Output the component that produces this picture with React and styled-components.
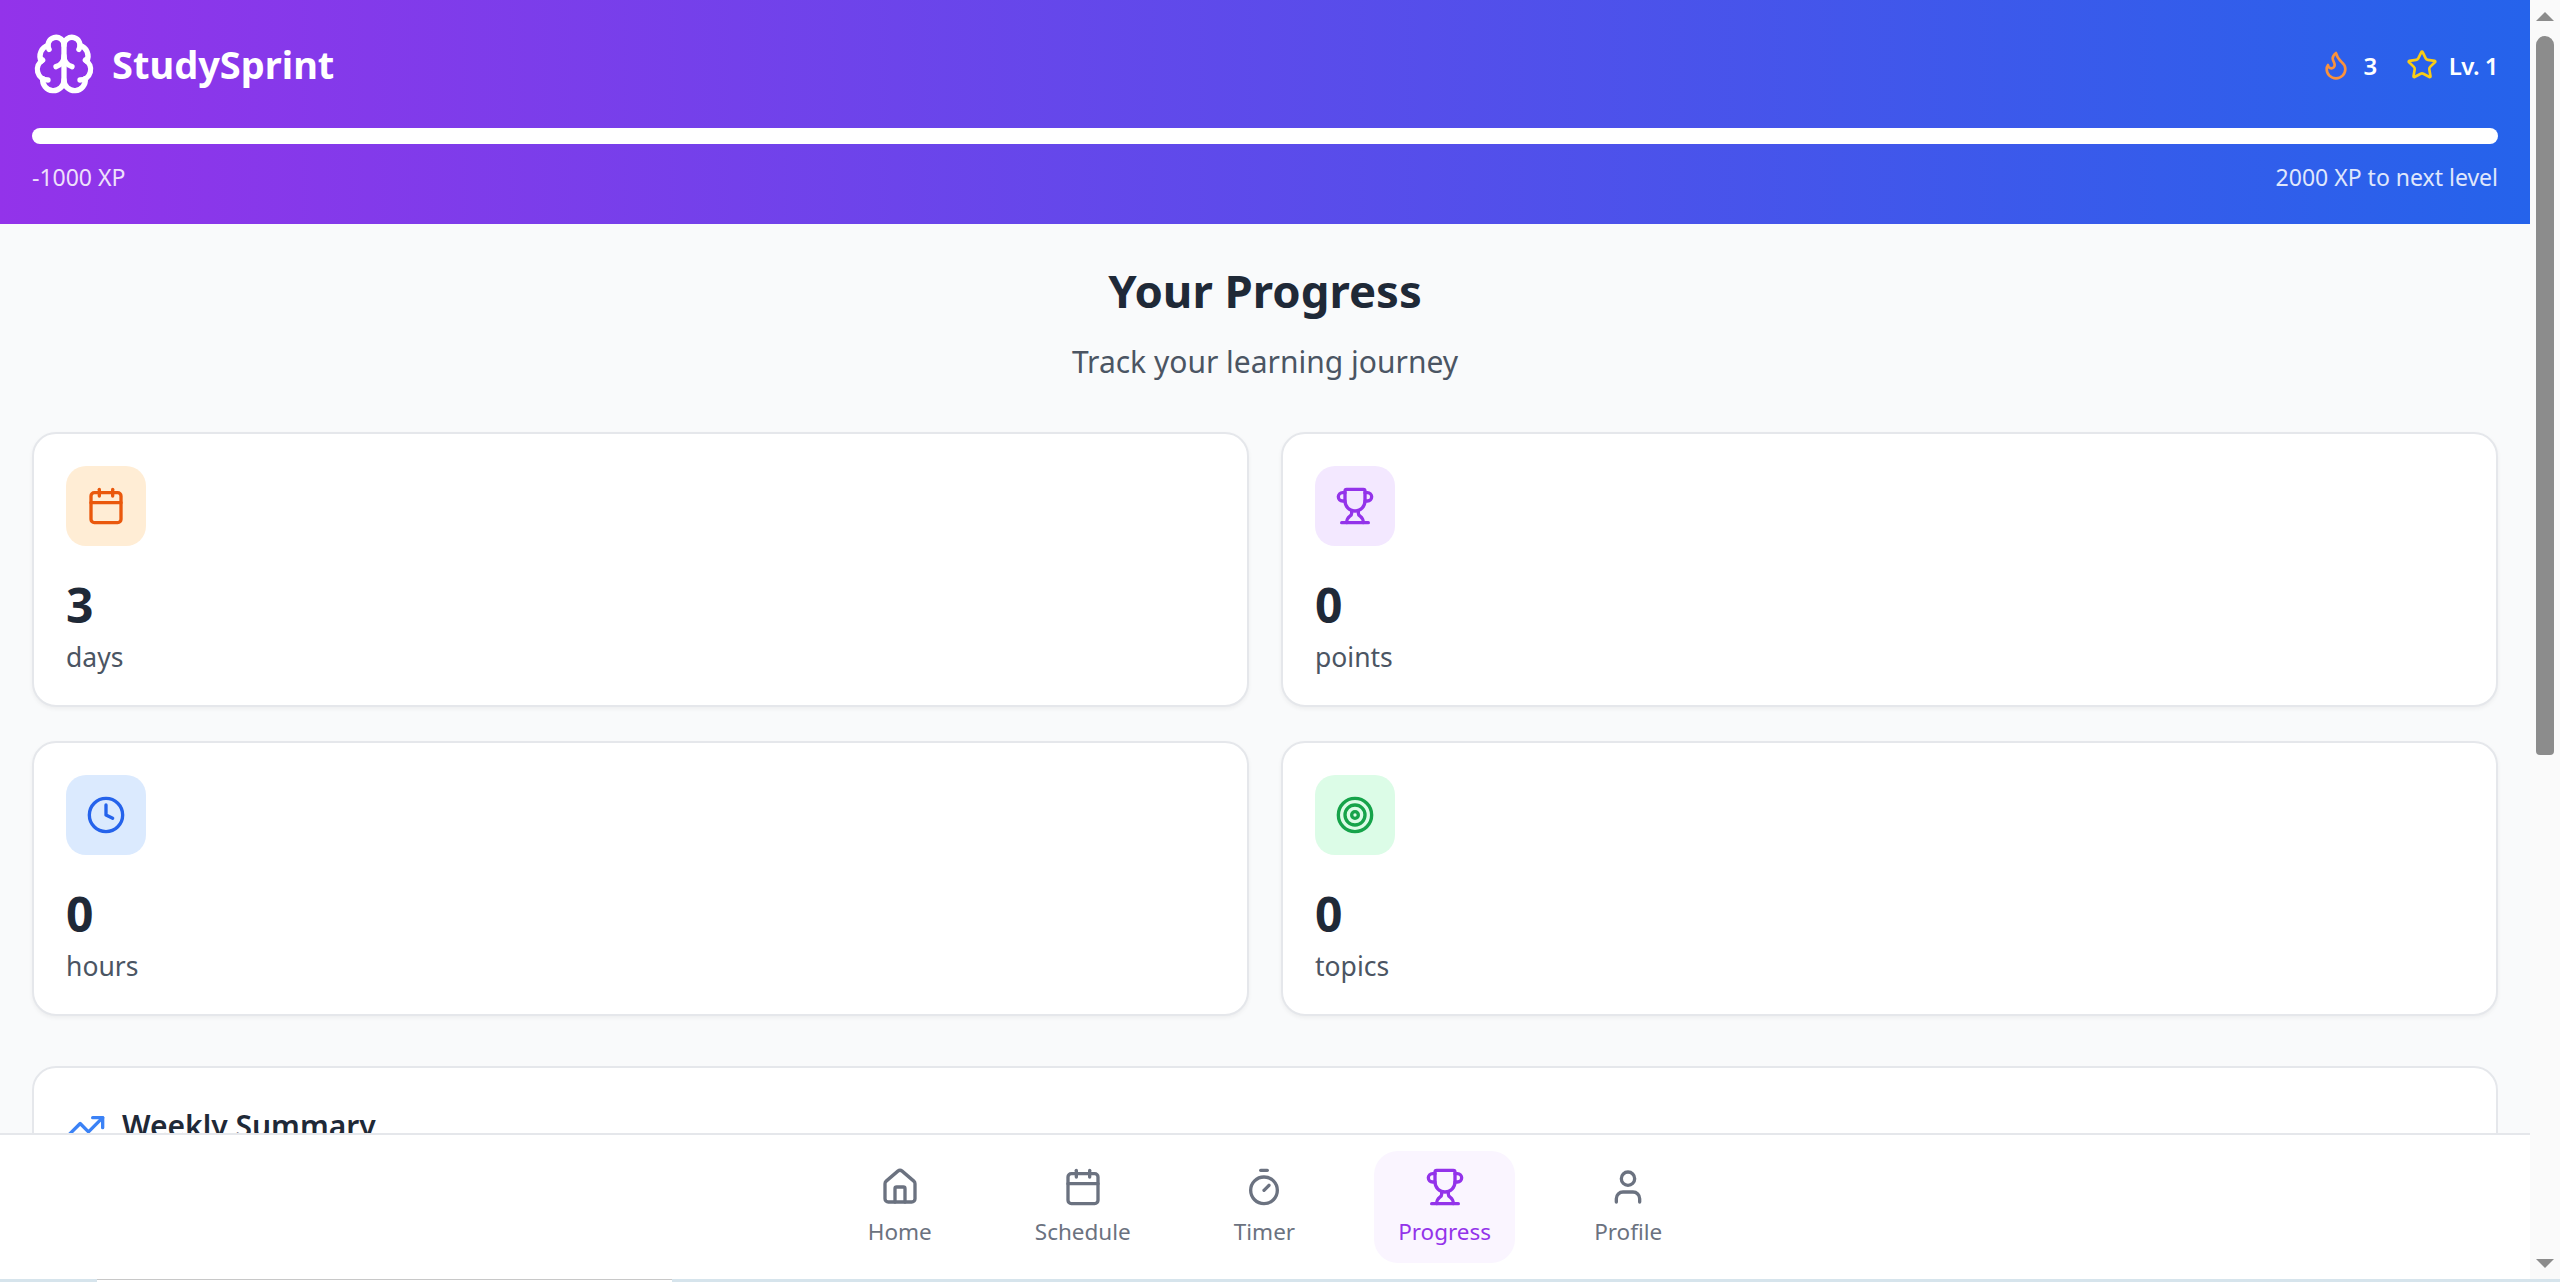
import React from 'react';
import styled, { createGlobalStyle } from 'styled-components';
import { Brain, Flame, Star, Calendar, Trophy, Clock, Target, TrendingUp, Home, Timer, User } from 'lucide-react';

const GlobalStyle = createGlobalStyle`
    html, body {
        margin : 0;
        padding : 0;
        height : 100%;
        overflow : hidden;
    }
    body {
        font-family : "Noto Sans", "Liberation Sans", sans-serif;
        background : #ffffff;
    }
`

const stats = [
    { icon : Calendar, value : '3', label : 'days', bg : '#ffedd5', fg : '#ea580c' },
    { icon : Trophy, value : '0', label : 'points', bg : '#f3e8ff', fg : '#9333ea' },
    { icon : Clock, value : '0', label : 'hours', bg : '#dbeafe', fg : '#2563eb' },
    { icon : Target, value : '0', label : 'topics', bg : '#dcfce7', fg : '#16a34a' },
];

const tabs = [
    { icon : Home, label : 'Home' },
    { icon : Calendar, label : 'Schedule' },
    { icon : Timer, label : 'Timer' },
    { icon : Trophy, label : 'Progress', active : true },
    { icon : User, label : 'Profile' },
];

const App = () => {
    return (
        <Frame>
            <GlobalStyle/>
            <Window>
                <Main>
                    <Header>
                        <HeaderTop>
                            <Logo>
                                <Brain size={64} color="#ffffff" strokeWidth={2}/>
                                <LogoText>StudySprint</LogoText>
                            </Logo>
                            <HeaderStats>
                                <HeaderStat>
                                    <Flame size={32} color="#fb923c"/>
                                    <span>3</span>
                                </HeaderStat>
                                <HeaderStat>
                                    <Star size={32} color="#facc15"/>
                                    <span>Lv. 1</span>
                                </HeaderStat>
                            </HeaderStats>
                        </HeaderTop>
                        <XpTrack/>
                        <XpRow>
                            <span>-1000 XP</span>
                            <span>2000 XP to next level</span>
                        </XpRow>
                    </Header>
                    <Content>
                        <Title>Your Progress</Title>
                        <Subtitle>Track your learning journey</Subtitle>
                        <StatGrid>
                            {stats.map((s) => (
                                <StatCard key={s.label}>
                                    <IconBox $bg={s.bg}>
                                        <s.icon size={40} color={s.fg}/>
                                    </IconBox>
                                    <StatValue>{s.value}</StatValue>
                                    <StatLabel>{s.label}</StatLabel>
                                </StatCard>
                            ))}
                        </StatGrid>
                        <SummaryCard>
                            <SummaryHead>
                                <TrendingUp size={40} color="#3b82f6"/>
                                <SummaryTitle>Weekly Summary</SummaryTitle>
                            </SummaryHead>
                        </SummaryCard>
                    </Content>
                    <BottomNav>
                        {tabs.map((t) => (
                            <NavItem key={t.label} $active={t.active}>
                                <t.icon size={40}/>
                                <NavLabel>{t.label}</NavLabel>
                            </NavItem>
                        ))}
                    </BottomNav>
                </Main>
                <ScrollBar>
                    <ArrowUp/>
                    <ScrollThumb/>
                    <ArrowDown/>
                </ScrollBar>
            </Window>
            <TaskStrip>
                <TaskTab/>
            </TaskStrip>
        </Frame>
    );
};

const Frame = styled.div`
    width : 2560px;
    height : 1282px;
    display : flex;
    flex-direction : column;
    overflow : hidden;
`

const Window = styled.div`
    flex : 1;
    min-height : 0;
    display : flex;
`

const Main = styled.div`
    width : 2530px;
    display : flex;
    flex-direction : column;
    background : #f9fafb;
`

const Header = styled.header`
    height : 224px;
    box-sizing : border-box;
    padding : 32px 32px 0;
    color : #ffffff;
    background : linear-gradient(to right, #9333ea, #2563eb);
`

const HeaderTop = styled.div`
    height : 64px;
    display : flex;
    justify-content : space-between;
    align-items : center;
`

const Logo = styled.div`
    display : flex;
    align-items : center;
    gap : 16px;
`

const LogoText = styled.span`
    font-size : 38px;
    font-weight : 700;
`

const HeaderStats = styled.div`
    display : flex;
    gap : 29px;
`

const HeaderStat = styled.div`
    display : flex;
    align-items : center;
    gap : 11px;
    padding-top : 2px;
    font-size : 24px;
    letter-spacing : -0.5px;
    font-weight : 600;
`

const XpTrack = styled.div`
    height : 16px;
    margin-top : 32px;
    border-radius : 8px;
    background : #ffffff;
`

const XpRow = styled.div`
    display : flex;
    justify-content : space-between;
    margin-top : 17px;
    font-size : 23px;
    line-height : 32px;
    opacity : 0.85;
`

const Content = styled.main`
    flex : 1;
    min-height : 0;
    overflow : hidden;
    padding : 34px 32px 0;
`

const Title = styled.h1`
    margin : 0;
    text-align : center;
    font-size : 45.5px;
    line-height : 64px;
    font-weight : 700;
    color : #1f2937;
`

const Subtitle = styled.p`
    margin : 20px 0 0;
    text-align : center;
    font-size : 30px;
    line-height : 40px;
    color : #4b5563;
`

const StatGrid = styled.div`
    display : grid;
    grid-template-columns : 1fr 1fr;
    gap : 34px 32px;
    margin-top : 50px;
`

const StatCard = styled.div`
    height : 275px;
    box-sizing : border-box;
    padding : 32px;
    background : #ffffff;
    border : 2px solid #e5e7eb;
    border-radius : 24px;
    box-shadow : 0 2px 4px rgba(0, 0, 0, 0.05);
`

const IconBox = styled.div`
    width : 80px;
    height : 80px;
    display : flex;
    justify-content : center;
    align-items : center;
    border-radius : 20px;
    background : ${(props) => props.$bg};
`

const StatValue = styled.div`
    margin-top : 31px;
    font-size : 48px;
    line-height : 56px;
    font-weight : 700;
    color : #1f2937;
`

const StatLabel = styled.div`
    margin-top : 6px;
    font-size : 26.5px;
    line-height : 36px;
    color : #4b5563;
`

const SummaryCard = styled.section`
    height : 400px;
    margin-top : 50px;
    box-sizing : border-box;
    padding : 37px 32px 32px;
    background : #ffffff;
    border : 2px solid #e5e7eb;
    border-radius : 24px;
`

const SummaryHead = styled.div`
    display : flex;
    align-items : center;
    gap : 16px;
`

const SummaryTitle = styled.h2`
    margin : 0;
    font-size : 30px;
    font-weight : 600;
    color : #1f2937;
`

const BottomNav = styled.nav`
    height : 146px;
    flex-shrink : 0;
    box-sizing : border-box;
    display : flex;
    justify-content : center;
    align-items : flex-start;
    gap : 55px;
    padding-top : 16px;
    background : #ffffff;
    border-top : 2px solid #e5e7eb;
`

const NavItem = styled.div`
    height : 112px;
    box-sizing : border-box;
    padding : 16px 24px 0;
    display : flex;
    flex-direction : column;
    align-items : center;
    gap : 9px;
    border-radius : 24px;
    color : ${(props) => props.$active ? '#9333ea' : '#6b7280'};
    background : ${(props) => props.$active ? '#faf5ff' : 'transparent'};
`

const NavLabel = styled.span`
    font-size : 22.5px;
    line-height : 32px;
`

const ScrollBar = styled.div`
    width : 30px;
    box-sizing : border-box;
    padding : 12px 6px 11px;
    display : flex;
    flex-direction : column;
    align-items : center;
    background : #fafafa;
`

const ArrowUp = styled.div`
    width : 0;
    height : 0;
    border-left : 9px solid transparent;
    border-right : 9px solid transparent;
    border-bottom : 9px solid #8c8c8c;
`

const ArrowDown = styled.div`
    width : 0;
    height : 0;
    margin-top : auto;
    border-left : 9px solid transparent;
    border-right : 9px solid transparent;
    border-top : 9px solid #8c8c8c;
`

const ScrollThumb = styled.div`
    width : 18px;
    height : 719px;
    margin-top : 15px;
    border-radius : 9px 9px 4px 4px;
    background : #8c8c8c;
`

const TaskStrip = styled.div`
    height : 3px;
    flex-shrink : 0;
    padding-left : 97px;
    background : #d6e4ec;
`

const TaskTab = styled.div`
    width : 575px;
    height : 3px;
    box-sizing : border-box;
    border-top : 1px solid #c8c8c8;
    background : #ffffff;
`

export default App;
